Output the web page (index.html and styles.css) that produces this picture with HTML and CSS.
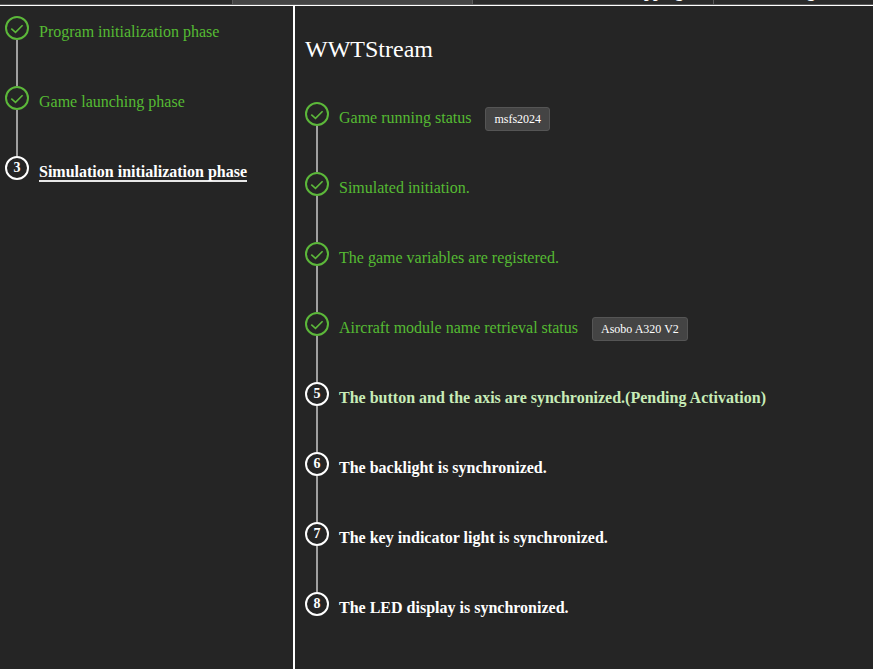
FILE: index.html
```html
<!DOCTYPE html>
<html>
  <head>
    <title>WWTStream</title>
    <link rel="stylesheet" href="styles.css">
  </head>
  <body>
    <div class="tabs">
      <div class="tab"></div>
      <div class="tab active"></div>
      <div class="tab wide"><span class="cut">Mapping</span></div>
      <div class="tab last-tab"><span class="cut">g</span></div>
    </div>
    <div class="main">
      <div class="side">
        <div class="step done">
          <div class="dot"><svg viewBox="0 0 20 20"><path d="M4.3 10.6l4.2 3.7 7.1-7"/></svg></div>
          <div class="label">Program initialization phase</div>
        </div>
        <div class="step done">
          <div class="dot"><svg viewBox="0 0 20 20"><path d="M4.3 10.6l4.2 3.7 7.1-7"/></svg></div>
          <div class="label">Game launching phase</div>
        </div>
        <div class="step current last">
          <div class="dot">3</div>
          <div class="label underlined">Simulation initialization phase</div>
        </div>
      </div>
      <div class="content">
        <h1>WWTStream</h1>
        <div class="step done">
          <div class="dot"><svg viewBox="0 0 20 20"><path d="M4.3 10.6l4.2 3.7 7.1-7"/></svg></div>
          <div class="label">Game running status</div>
          <span class="tag">msfs2024</span>
        </div>
        <div class="step done">
          <div class="dot"><svg viewBox="0 0 20 20"><path d="M4.3 10.6l4.2 3.7 7.1-7"/></svg></div>
          <div class="label">Simulated initiation.</div>
        </div>
        <div class="step done">
          <div class="dot"><svg viewBox="0 0 20 20"><path d="M4.3 10.6l4.2 3.7 7.1-7"/></svg></div>
          <div class="label">The game variables are registered.</div>
        </div>
        <div class="step done">
          <div class="dot"><svg viewBox="0 0 20 20"><path d="M4.3 10.6l4.2 3.7 7.1-7"/></svg></div>
          <div class="label">Aircraft module name retrieval status</div>
          <span class="tag">Asobo A320 V2</span>
        </div>
        <div class="step current">
          <div class="dot">5</div>
          <div class="label pending">The button and the axis are synchronized.(Pending Activation)</div>
        </div>
        <div class="step current">
          <div class="dot">6</div>
          <div class="label">The backlight is synchronized.</div>
        </div>
        <div class="step current">
          <div class="dot">7</div>
          <div class="label">The key indicator light is synchronized.</div>
        </div>
        <div class="step current last">
          <div class="dot">8</div>
          <div class="label">The LED display is synchronized.</div>
        </div>
      </div>
    </div>
  </body>
</html>
```

FILE: styles.css
```css
html, body {
  margin: 0;
  height: 100%;
  overflow: hidden;
  background-color: #252525;
  color: #fff;
  font-family: "Liberation Serif", "Times New Roman", serif;
  font-size: 16px;
}
body {
  display: flex;
  flex-direction: column;
}
.tabs {
  display: flex;
  height: 5px;
  flex: none;
  overflow: hidden;
  background-color: #5a5a5a;
}
.tab {
  width: 232px;
  height: 4px;
  margin-right: 1px;
  background-color: #2a2a2a;
  overflow: hidden;
}
.tab.active {
  width: 239px;
  background-color: #444;
}
.tab.wide {
  width: 240px;
}
.tab .cut {
  display: block;
  margin-top: -16px;
  padding-left: 148px;
  font-weight: bold;
  line-height: 15px;
}
.tab.last-tab {
  flex: 1;
  margin-right: 0;
}
.last-tab .cut {
  padding-left: 93px;
}
.main {
  display: flex;
  flex: 1;
  border-top: 1px solid #fff;
}
.side {
  width: 295px;
  box-sizing: border-box;
  padding: 10px 0 0 5px;
  border-right: 2px solid #fff;
  flex: none;
}
.content {
  flex: 1;
  padding: 0 0 0 10px;
}
h1 {
  margin: 0;
  padding-top: 29px;
  height: 67px;
  font-size: 24px;
  line-height: 28px;
  font-weight: normal;
}
.step {
  display: flex;
  align-items: flex-start;
  height: 70px;
  position: relative;
}
.step::after {
  content: "";
  position: absolute;
  left: 11px;
  top: 24px;
  bottom: 0;
  width: 2px;
  background-color: #a0a0a0;
}
.step.last::after {
  display: none;
}
.dot {
  width: 24px;
  height: 24px;
  box-sizing: border-box;
  border: 2px solid #fff;
  border-radius: 50%;
  flex: none;
  display: flex;
  align-items: center;
  justify-content: center;
  font-size: 14px;
  font-weight: bold;
  line-height: 1;
}
.dot svg {
  width: 20px;
  height: 20px;
  fill: none;
  stroke: #5cb83a;
  stroke-width: 1.6;
}
.label {
  margin-left: 10px;
  line-height: 17px;
  padding-top: 7px;
}
.done .dot {
  border-color: #5cb83a;
}
.done .label {
  color: #55bb33;
}
.current .label {
  font-weight: bold;
}
.current .label.pending {
  color: #c8ecb8;
}
.label.underlined {
  border-bottom: 2px solid #e8e8e8;
}
.tag {
  margin: 5px 0 0 14px;
  height: 24px;
  line-height: 22px;
  padding: 0 8px;
  box-sizing: border-box;
  background-color: #444;
  border: 1px solid #555;
  border-radius: 3px;
  font-size: 12px;
}
```
